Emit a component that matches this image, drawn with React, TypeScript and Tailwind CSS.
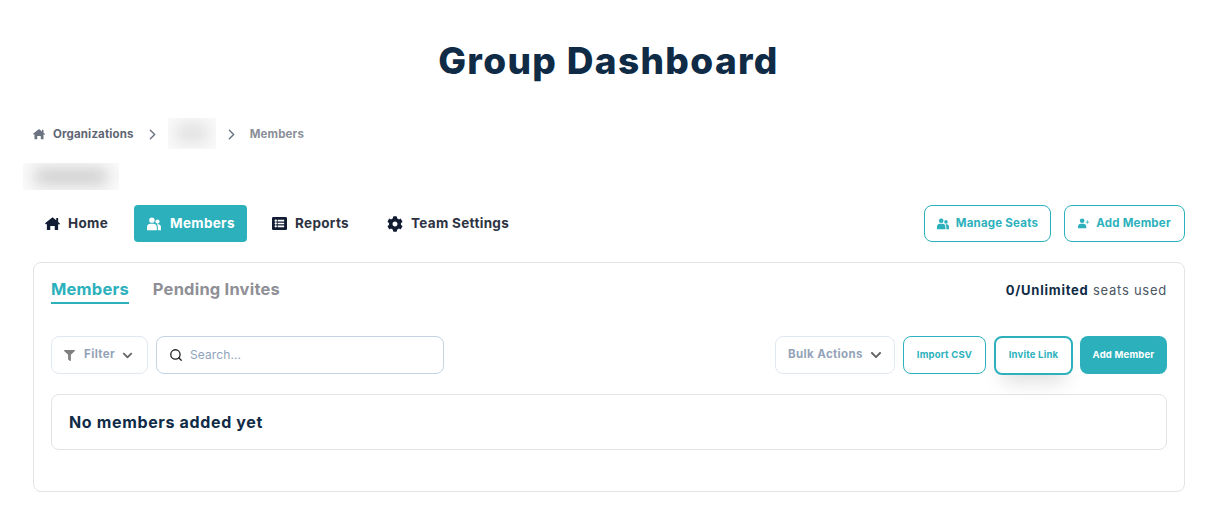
import { FaCog, FaFilter, FaChevronDown, FaListAlt } from "react-icons/fa";
import { ChevronRight, Search } from "lucide-react";

function Blur({ w, h, inner, tone }: { w: string; h: string; inner: string; tone: string }) {
  return (
    <div className={`${w} ${h} overflow-hidden bg-[#fafafa] flex items-center justify-center`}>
      <div className={`${inner} ${tone} blur-[8px]`} />
    </div>
  );
}

function HomeIcon({ className }: { className: string }) {
  return (
    <svg viewBox="0 0 16 16" className={className} fill="currentColor">
      <path d="M8 1.2 12 4.6V2.2h2v4.1l2 1.7-1 1.2-1-.8V15h-3.6v-4.4H5.6V15H2V8.2l-1 .8-1-1.2z" />
    </svg>
  );
}

function PeopleIcon({ className }: { className: string }) {
  return (
    <svg viewBox="0 0 16 16" className={className} fill="currentColor">
      <circle cx="5.6" cy="3.6" r="3.1" />
      <circle cx="12" cy="5.2" r="2.4" />
      <path d="M0 15v-3.4C0 9.3 1.6 7.6 3.8 7.6h3.6c2.2 0 3.8 1.7 3.8 4V15z" />
      <path d="M11.2 8.3h1.6c1.8 0 3.2 1.4 3.2 3.3V15h-3.6v-3.4c0-1.3-.4-2.4-1.2-3.3z" />
    </svg>
  );
}

function UserPlusIcon({ className }: { className: string }) {
  return (
    <svg viewBox="0 0 16 16" className={className} fill="currentColor">
      <circle cx="6" cy="4" r="3.4" />
      <path d="M0 15v-2.4C0 10 1.9 8.4 4 8.4h4c2.1 0 4 1.6 4 4.2V15z" />
      <path d="M13 3.4h1.1v1.9H16v1.1h-1.9v1.9H13V6.4h-1.9V5.3H13z" />
    </svg>
  );
}

export default function App() {
  return (
    <div className="w-[1209px] h-[511px] bg-white overflow-hidden font-['Inter','Liberation_Sans',sans-serif] pl-[33px] pr-[24px]">
      <h1 className="pt-[38px] h-[118px] text-center text-[37px] leading-[46px] font-extrabold text-[#0f2b46] tracking-[1.35px] -ml-[1px]">Group Dashboard</h1>
      <nav className="flex items-center h-[32px] text-[11.5px] font-bold tracking-[0.15px]">
        <HomeIcon className="w-[12px] h-[12px] text-[#6b7280] mr-[8px] -mt-[1px]" />
        <span className="text-[#5f6673] mt-[2px]">Organizations</span>
        <ChevronRight className="w-[17px] h-[17px] text-[#6b7280] ml-[10px] mr-[7px]" strokeWidth={2} />
        <div className="-mt-[2px]">
          <Blur w="w-[48px]" h="h-[31px]" inner="w-[32px] h-[18px]" tone="bg-[#dedede]" />
        </div>
        <ChevronRight className="w-[17px] h-[17px] text-[#6b7280] ml-[7px] mr-[10px] mt-[1px]" strokeWidth={2} />
        <span className="text-[#8a8f98] mt-[2px]">Members</span>
      </nav>
      <div className="-ml-[10px] mt-[13px]">
        <Blur w="w-[96px]" h="h-[27px]" inner="w-[72px] h-[15px]" tone="bg-[#c8c8c8]" />
      </div>
      <div className="flex items-center justify-between h-[37px] mt-[15px]">
        <div className="flex items-center text-[13.5px] font-bold tracking-[0.32px] text-[#2d3342]">
          <div className="flex items-center pl-[12px] w-[101px] gap-[8px]">
            <HomeIcon className="w-[15px] h-[15px] text-[#111c33]" />
            <span>Home</span>
          </div>
          <div className="flex items-center h-[37px] w-[113px] pl-[13px] gap-[9px] rounded-[4px] bg-[#2cb1bc] text-white">
            <PeopleIcon className="w-[14px] h-[14px]" />
            <span>Members</span>
          </div>
          <div className="flex items-center pl-[25px] w-[116px] gap-[8px]">
            <FaListAlt className="text-[15px] text-[#111c33]" />
            <span>Reports</span>
          </div>
          <div className="flex items-center pl-[24px] gap-[8px]">
            <FaCog className="text-[16px] text-[#111c33]" />
            <span>Team Settings</span>
          </div>
        </div>
        <div className="flex items-center gap-[13px] text-[11.5px] font-bold tracking-[0.22px] text-[#2cb1bc]">
          <div className="flex items-center justify-center gap-[7px] w-[127px] h-[37px] rounded-[8px] border border-[#2cb1bc]">
            <PeopleIcon className="w-[12px] h-[12px]" />
            <span>Manage Seats</span>
          </div>
          <div className="flex items-center justify-center gap-[7px] w-[121px] h-[37px] rounded-[8px] border border-[#2cb1bc]">
            <UserPlusIcon className="w-[11px] h-[11px]" />
            <span>Add Member</span>
          </div>
        </div>
      </div>
      <div className="mt-[20px] h-[230px] rounded-[8px] border border-[#e2e4e8] px-[17px]">
        <div className="flex items-start justify-between pt-[14px] h-[73px]">
          <div className="flex items-start gap-[24px] text-[16.5px] font-bold tracking-[0.2px]">
            <div className="text-[#2cb1bc] border-b-2 border-[#2cb1bc] h-[27px] leading-[25px]">Members</div>
            <div className="text-[#8f8f96] leading-[25px]">Pending Invites</div>
          </div>
          <div className="text-[13px] leading-[27px] tracking-[0.75px] text-[#4b5563]">
            <span className="font-bold text-[#0f2b46]">0/Unlimited</span> seats used
          </div>
        </div>
        <div className="flex items-center justify-between h-[38px]">
          <div className="flex items-center gap-[8px]">
            <div className="flex items-center w-[97px] h-[38px] pl-[12px] rounded-[8px] border border-[#e2e8f0] text-[11.5px] font-bold tracking-[0.4px] text-[#94a3b8]">
              <FaFilter className="text-[11px] text-[#808080] mr-[9px]" />
              <span>Filter</span>
              <FaChevronDown className="text-[11px] text-[#666] ml-[7px]" />
            </div>
            <div className="flex items-center w-[288px] h-[38px] pl-[12px] gap-[7px] rounded-[8px] border border-[#c5d2e3] text-[12px] tracking-[0.1px] text-[#8fa3bd]">
              <Search className="w-[14px] h-[14px] text-[#222]" strokeWidth={2.2} />
              <span>Search...</span>
            </div>
          </div>
          <div className="flex items-center">
            <div className="flex items-center w-[120px] h-[38px] pl-[12px] mr-[8px] rounded-[8px] border border-[#e2e8f0] text-[11.5px] font-bold tracking-[0.38px] text-[#94a3b8]">
              <span>Bulk Actions</span>
              <FaChevronDown className="text-[12px] text-[#666] ml-[7px]" />
            </div>
            <div className="flex items-center justify-center w-[83px] h-[38px] mr-[8px] rounded-[8px] border border-[#2cb1bc] text-[9.5px] font-bold tracking-[0.2px] text-[#2cb1bc]">Import CSV</div>
            <div className="flex items-center justify-center w-[79px] h-[39px] mr-[7px] rounded-[8px] border-2 border-[#2cb1bc] text-[9.5px] font-bold tracking-[0.2px] text-[#2cb1bc] bg-white shadow-[0_14px_20px_-8px_rgba(0,0,0,0.14)]">Invite Link</div>
            <div className="flex items-center justify-center w-[87px] h-[38px] rounded-[8px] bg-[#2cb1bc] text-[9.5px] font-bold tracking-[0.2px] text-white">Add Member</div>
          </div>
        </div>
        <div className="flex items-center mt-[20px] h-[56px] pl-[17px] rounded-[8px] border border-[#e2e4e8] text-[16px] font-bold tracking-[0.65px] text-[#0f2b46]">
          No members added yet
        </div>
      </div>
    </div>
  );
}
